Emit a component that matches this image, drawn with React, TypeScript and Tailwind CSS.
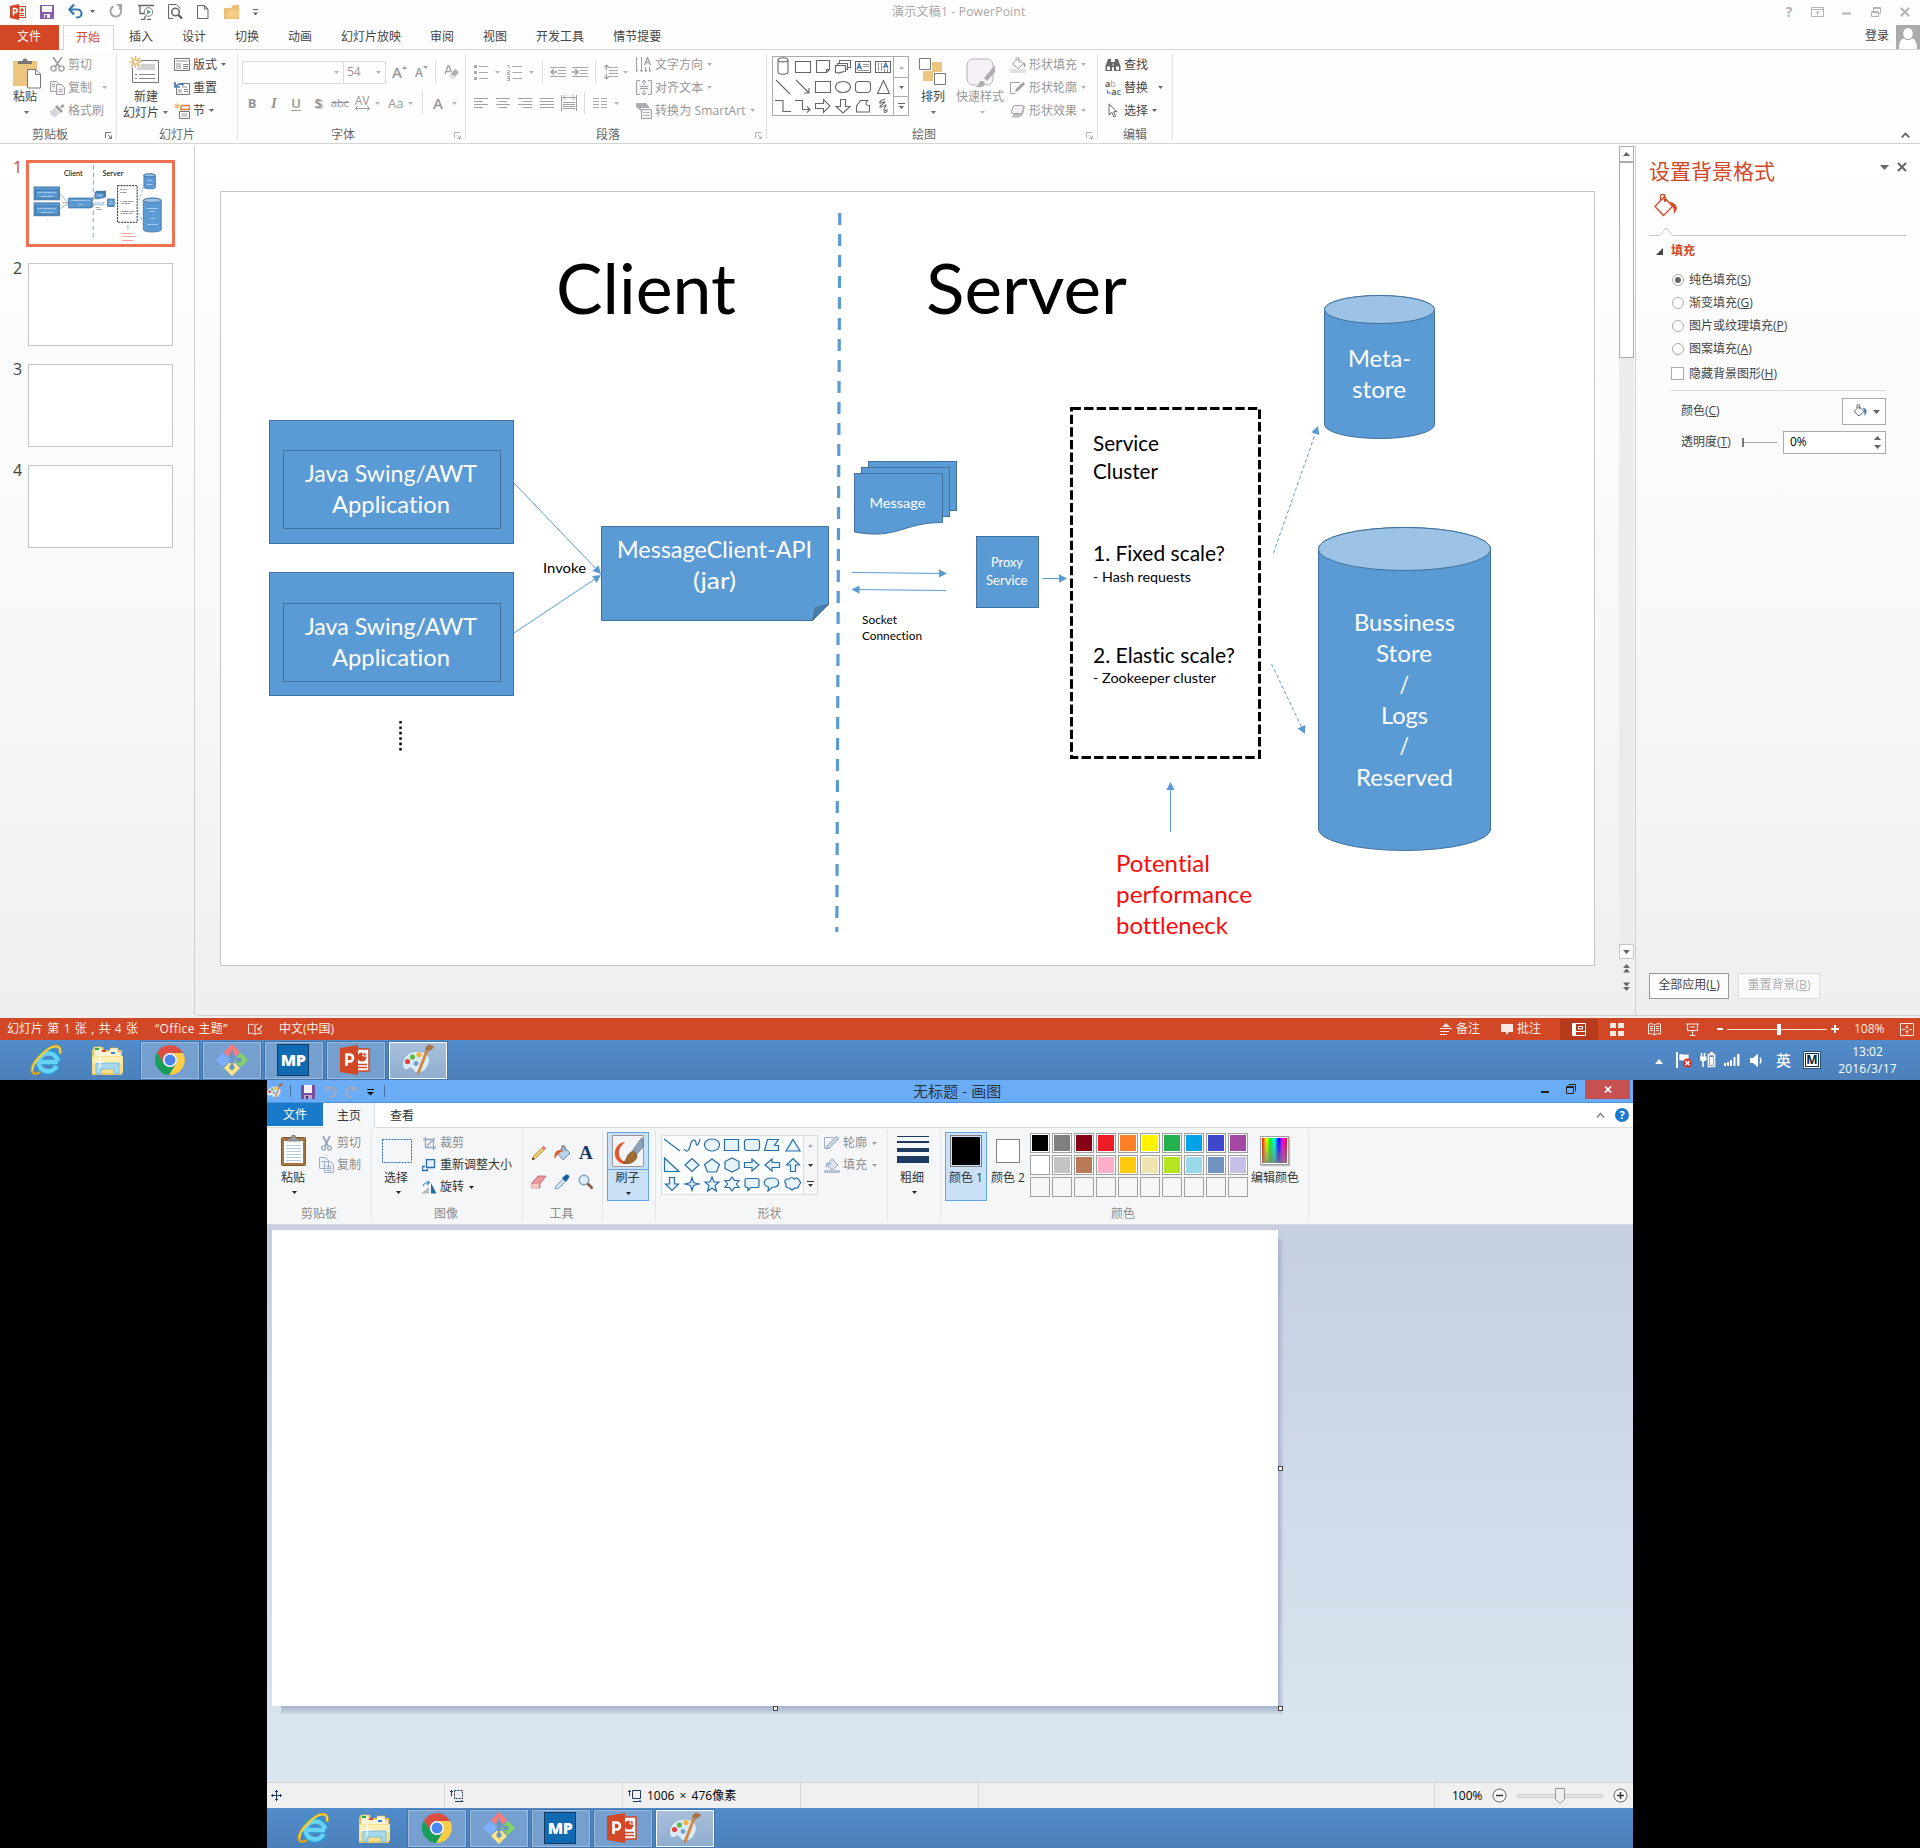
import React from "react";

type Kids = { children?: React.ReactNode };

function Ico({ w, h, c = "", children }: Kids & { w: number; h: number; c?: string }) {
  return (
    <svg width={w} height={h} viewBox={`0 0 ${w} ${h}`} fill="none" className={`block shrink-0 ${c}`}>
      {children}
    </svg>
  );
}

function Dn({ c = "", color = "#666" }: { c?: string; color?: string }) {
  return (
    <Ico w={5} h={3} c={c}>
      <path d="M0 0h5L2.5 3z" fill={color} />
    </Ico>
  );
}

/* ---------------------------------------------------------------- slide diagram */

const FILL = "#5b9bd5";
const EDGE = "#41719c";

function T({ x, y, w, s, f = "#fff", children }: { x: number; y: number; w: number; s: number; f?: string; children: string }) {
  return (
    <text x={x} y={y} fontSize={s} fill={f} textLength={w} lengthAdjust="spacingAndGlyphs">
      {children}
    </text>
  );
}

type ArrowProps = { x1: number; y1: number; x2: number; y2: number; dash?: string; mini?: boolean };

function Arrow({ x1, y1, x2, y2, dash, mini }: ArrowProps) {
  const a = Math.atan2(y2 - y1, x2 - x1);
  const len = mini ? 14 : 8;
  const half = mini ? 8 : 4.2;
  const bx = x2 - len * Math.cos(a);
  const by = y2 - len * Math.sin(a);
  const px = half * Math.sin(a);
  const py = half * Math.cos(a);
  return (
    <g>
      <line
        x1={x1}
        y1={y1}
        x2={bx}
        y2={by}
        stroke={FILL}
        strokeWidth={mini ? 6 : 1}
        strokeDasharray={dash && (mini ? "26 16" : dash)}
      />
      <path d={`M${x2} ${y2}L${bx + px} ${by - py}L${bx - px} ${by + py}z`} fill={FILL} />
    </g>
  );
}

function Cylinder({ x1, x2, y1, y2, r }: { x1: number; x2: number; y1: number; y2: number; r: number }) {
  const rx = (x2 - x1) / 2;
  return (
    <g stroke={EDGE}>
      <path
        d={`M${x1} ${y1 + r}V${y2 - r}A${rx} ${r} 0 0 0 ${x2} ${y2 - r}V${y1 + r}A${rx} ${r} 0 0 0 ${x1} ${y1 + r}z`}
        fill={FILL}
      />
      <ellipse cx={x1 + rx} cy={y1 + r} rx={rx} ry={r} fill="#9cc3e6" />
    </g>
  );
}

function Diagram({ mini }: { mini?: boolean }) {
  return (
    <svg
      viewBox="221 192 1373 773"
      className="block h-full w-full [font-variant-ligatures:none]"
      preserveAspectRatio="none"
      fontFamily='Lato, "Liberation Sans", sans-serif'
      strokeWidth={mini ? 8 : 1}
    >
      <T x={556} y={314} w={180} s={69} f="#000">Client</T>
      <T x={926} y={314} w={201} s={69} f="#000">Server</T>
      <line
        x1={839.8}
        y1={213}
        x2={836.8}
        y2={932}
        stroke={FILL}
        strokeWidth={mini ? 8 : 3.2}
        strokeDasharray={mini ? "44 28" : "12 9"}
      />

      <g fill={FILL} stroke={EDGE}>
        <rect x={269.5} y={420.5} width={244} height={123} />
        <rect x={283.5} y={450.5} width={217} height={78} />
        <rect x={269.5} y={572.5} width={244} height={123} />
        <rect x={283.5} y={603.5} width={217} height={78} />
      </g>
      <T x={305} y={482} w={172} s={23}>Java Swing/AWT</T>
      <T x={332} y={513} w={118} s={23}>Application</T>
      <T x={305} y={635} w={172} s={23}>Java Swing/AWT</T>
      <T x={332} y={666} w={118} s={23}>Application</T>
      <line x1={400.5} y1={721} x2={400.5} y2={751} stroke="#000" strokeWidth={2.4} strokeDasharray="2.6 2.8" />

      <Arrow mini={mini} x1={514} y1={483} x2={601} y2={574} />
      <Arrow mini={mini} x1={514} y1={633} x2={601} y2={575} />
      <T x={543} y={573} w={43} s={13.5} f="#000">Invoke</T>

      <path d="M601.500 526.500h227v78l-16 16h-211z" fill={FILL} stroke={EDGE} />
      <path d="M812.500 620.500l3-13 13-3z" fill="#4a7eae" stroke={EDGE} />
      <T x={617} y={558} w={195} s={23}>MessageClient-API</T>
      <T x={693} y={589} w={43} s={23}>(jar)</T>

      <g fill={FILL} stroke={EDGE}>
        <rect x={868.5} y={461.5} width={88} height={49} />
        <rect x={861.5} y={467.5} width={88} height={49} />
        <path d="M854.500 473.500h88v49C902 522.500 898 540 854.500 532z" />
      </g>
      <T x={869.5} y={508} w={56} s={14.2}>Message</T>

      <Arrow mini={mini} x1={852} y1={572.5} x2={947} y2={573.5} />
      <Arrow mini={mini} x1={946} y1={590.5} x2={851.5} y2={589.5} />
      <T x={862} y={624} w={35} s={11.5} f="#000">Socket</T>
      <T x={862} y={640} w={60} s={11.5} f="#000">Connection</T>

      <rect x={976.5} y={536.5} width={62} height={71} fill={FILL} stroke={EDGE} />
      <T x={991} y={567} w={32} s={12.8}>Proxy</T>
      <T x={986} y={585} w={41.5} s={12.8}>Service</T>
      <Arrow mini={mini} x1={1042.5} y1={578.5} x2={1067} y2={578.5} />

      <rect
        x={1071.5}
        y={408.5}
        width={188}
        height={349}
        stroke="#000"
        strokeWidth={mini ? 8 : 3}
        strokeDasharray={mini ? "20 8" : "9.400 3.200"}
        fill="none"
      />
      <T x={1093} y={451} w={66} s={20.5} f="#000">Service</T>
      <T x={1093} y={479} w={65} s={20.5} f="#000">Cluster</T>
      <T x={1093} y={561} w={132} s={20.5} f="#000">1. Fixed scale?</T>
      <T x={1093} y={582} w={98} s={13.5} f="#000">- Hash requests</T>
      <T x={1093} y={663} w={142} s={20.5} f="#000">2. Elastic scale?</T>
      <T x={1093} y={683} w={123} s={13.5} f="#000">- Zookeeper cluster</T>

      <Arrow mini={mini} x1={1273.5} y1={553} x2={1318} y2={426} dash="3.500 2.500" />
      <Arrow mini={mini} x1={1271.5} y1={664} x2={1305} y2={734} dash="3.500 2.500" />
      <Arrow mini={mini} x1={1170.5} y1={832} x2={1170.5} y2={782} />

      <Cylinder x1={1324.5} x2={1434.5} y1={295.5} y2={438.5} r={14} />
      <T x={1348} y={367} w={63} s={23}>Meta-</T>
      <T x={1352} y={398} w={54} s={23}>store</T>

      <Cylinder x1={1318.5} x2={1490.5} y1={527.5} y2={850.5} r={21.5} />
      <T x={1354} y={631} w={101} s={23}>Bussiness</T>
      <T x={1376} y={662} w={56} s={23}>Store</T>
      <T x={1399.5} y={693} w={9.5} s={23}>/</T>
      <T x={1381} y={724} w={47} s={23}>Logs</T>
      <T x={1399.5} y={754} w={9.5} s={23}>/</T>
      <T x={1356} y={786} w={97} s={23}>Reserved</T>

      <T x={1116} y={872} w={94} s={23} f="#fb0a0a">Potential</T>
      <T x={1116} y={903} w={136} s={23} f="#fb0a0a">performance</T>
      <T x={1116} y={934} w={112} s={23} f="#fb0a0a">bottleneck</T>
    </svg>
  );
}

/* ---------------------------------------------------------------- PowerPoint title and tabs */

function PptIcon() {
  return (
    <Ico w={16} h={16}>
      <path d="M0 2l9-2v16l-9-2z" fill="#d24726" />
      <rect x={9} y={2.5} width={6.5} height={11} fill="#fff" stroke="#d24726" />
      <path d="M10 9.500h4M10 11.500h4" stroke="#d24726" />
      <circle cx={12} cy={6} r={1.7} fill="#d24726" />
      <path d="M3.500 11.500v-7h1.700a2 2 0 0 1 0 4H3.500" stroke="#fff" strokeWidth={1.5} />
    </Ico>
  );
}

function TitleBar() {
  return (
    <div className="flex h-[25px] items-start">
      <div className="flex h-[23px] w-[892px] items-center pl-[10px]">
        <PptIcon />
        <Ico w={14} h={14} c="ml-[14px]">
          <path d="M0 0h14v14H0z" fill="#8a5cb0" />
          <path d="M2 1h10v6H2zM4 9h6v4H4z" fill="#fff" />
          <path d="M5 10h2v3H5z" fill="#8a5cb0" />
        </Ico>
        <Ico w={16} h={15} c="ml-[14px]">
          <path d="M2 5.500h7.500a4 4 0 0 1 0 8H8" stroke="#3e78b3" strokeWidth={2.2} />
          <path d="M6 .5L1.500 5.500 6 10.500" stroke="#3e78b3" strokeWidth={2.4} />
        </Ico>
        <Dn c="ml-[6px]" />
        <Ico w={14} h={15} c="ml-[14px]">
          <path d="M4.500 2.500a5.300 5.300 0 1 0 6 1" stroke="#a6a6a6" strokeWidth={2} />
          <path d="M7 0h6v6z" fill="#a6a6a6" />
        </Ico>
        <Ico w={17} h={16} c="ml-[15px]">
          <path d="M0 1.500h16M2 2v7.500h4M3 15.500h4M9 15.500h4M7 12v3" stroke="#666" strokeWidth={1.3} />
          <circle cx={10.5} cy={8} r={4.3} fill="#fff" stroke="#777" />
          <path d="M9 5.500l4 2.500-4 2.500z" fill="#4aa37b" />
        </Ico>
        <Ico w={15} h={16} c="ml-[13px]">
          <path d="M5 14.500H.5V.5h8l4 4" stroke="#666" />
          <circle cx={7.5} cy={8} r={3.8} stroke="#666" strokeWidth={1.5} fill="#fff" />
          <path d="M10.500 11l3.500 3.500" stroke="#555" strokeWidth={2.2} />
        </Ico>
        <Ico w={12} h={14} c="ml-[14px]">
          <path d="M.5.5h7l3.500 3.500v9.500H.5zM7.500.5V4H11" stroke="#666" />
        </Ico>
        <Ico w={16} h={14} c="ml-[15px]">
          <path d="M0 14V3h7l2-3h6v14z" fill="#eabf73" />
          <path d="M2 13L4.500 5H16l-2.500 8z" fill="#f3cd88" />
        </Ico>
        <Ico w={5} h={7} c="ml-[13px] mt-[2px]">
          <path d="M0 .5h5" stroke="#666" />
          <path d="M0 3.500h5L2.500 6.500z" fill="#666" />
        </Ico>
      </div>
      <div className="w-[140px] whitespace-nowrap text-[12px] leading-[24px] tracking-[0.22px] text-[#a6a6a6]">演示文稿1 - PowerPoint</div>
      <div className="ml-auto flex h-[23px] items-center pr-[10px]">
        <span className="w-[8px] text-center text-[14px] font-bold leading-[22px] text-[#b4b4b4]">?</span>
        <Ico w={13} h={10} c="ml-[18px]">
          <path d="M.5.5h12v9H.5zM.5 2.500h12M6.500 8V4M4.500 6l2-2 2 2" stroke="#b4b4b4" />
        </Ico>
        <Ico w={9} h={3} c="ml-[18px] mt-[3px]">
          <path d="M0 1.500h9" stroke="#b4b4b4" strokeWidth={2} />
        </Ico>
        <Ico w={10} h={10} c="ml-[20px]">
          <path d="M.5 4.500h7v5h-7zM2.500 4V.5h7v6H8M.5 5.500h7M2.500 1.500h7" stroke="#b4b4b4" />
        </Ico>
        <Ico w={10} h={10} c="ml-[19px]">
          <path d="M.8.8l8.400 8.400M9.200.8L.8 9.200" stroke="#b4b4b4" strokeWidth={2} />
        </Ico>
      </div>
    </div>
  );
}

function TabBar() {
  const tab = "h-[24px] leading-[24px]";
  return (
    <div className="flex h-[25px] border-b border-[#d4d4d4] text-[12px] whitespace-nowrap text-[#444]">
      <div className="h-[25px] w-[59px] bg-[#d24726] pr-px text-center leading-[24px] text-white">文件</div>
      <div className="ml-[4px] h-[25px] w-[51px] border-x border-t border-[#d4d4d4] bg-white pr-px text-center leading-[23px] text-[#d24726]">开始</div>
      <div className={`ml-[15px] ${tab}`}>插入</div>
      <div className={`ml-[29px] ${tab}`}>设计</div>
      <div className={`ml-[29px] ${tab}`}>切换</div>
      <div className={`ml-[29px] ${tab}`}>动画</div>
      <div className={`ml-[29px] ${tab}`}>幻灯片放映</div>
      <div className={`ml-[29px] ${tab}`}>审阅</div>
      <div className={`ml-[29px] ${tab}`}>视图</div>
      <div className={`ml-[29px] ${tab}`}>开发工具</div>
      <div className={`ml-[29px] ${tab}`}>情节提要</div>
      <div className="ml-auto leading-[21px]">登录</div>
      <Ico w={24} h={24} c="ml-[7px]">
        <path d="M0 0h24v24H0z" fill="#ababab" />
        <ellipse cx={12} cy={8.5} rx={4.8} ry={5.5} fill="#fff" />
        <path d="M3 24c0-7 2-10 5-10.500 2 2 6 2 8 0 3 .5 5 3.500 5 10.500z" fill="#fff" />
      </Ico>
    </div>
  );
}

/* ---------------------------------------------------------------- PowerPoint ribbon */

function Group({ w, label, lx, launcher, children }: Kids & { w: string; label: string; lx: string; launcher?: string }) {
  return (
    <div className={`flex h-[85px] shrink-0 flex-col border-r border-[#e1e1e1] ${w}`}>
      <div className="flex h-[69px]">{children}</div>
      <div className={`flex h-[16px] items-center whitespace-nowrap text-[12px] leading-[16px] text-[#666] ${lx}`}>
        <span className="mt-[7px]">{label}</span>
        {launcher && (
          <Ico w={7} h={7} c="ml-auto mr-[4px] mt-[8px]">
            <path d="M.5 6V.5H6M3 3l3 3M6.500 3.500v3h-3" stroke={launcher} />
          </Ico>
        )}
      </div>
    </div>
  );
}

const G = "#a0a0a0";

function SmallRow({ icon, text, gap = "ml-[4px]", off, arrow }: { icon: React.ReactNode; text: string; gap?: string; off?: boolean; arrow?: string }) {
  return (
    <div className={`flex h-[23px] items-center whitespace-nowrap text-[12px] leading-[23px] ${off ? "text-[#979797]" : "text-[#444]"}`}>
      <div className="flex w-[16px] shrink-0 justify-center">{icon}</div>
      <span className={gap}>{text}</span>
      {arrow && <Dn c={arrow} color={off ? "#b5b5b5" : "#666"} />}
    </div>
  );
}

function ClipboardGroup() {
  return (
    <Group w="w-[117px]" label="剪贴板" lx="pl-[32px]" launcher="#777">
      <div className="ml-[13px] flex w-[28px] flex-col">
        <Ico w={28} h={31} c="mt-[4px]">
          <path d="M0 3h24v25H0z" fill="#ecc67e" />
          <path d="M5 6V3h4.500a2.500 2.500 0 0 1 5 0H19v3z" fill="#777" />
          <path d="M14.500 11.500h8.500l4.500 4.500v14h-13z" fill="#fff" stroke="#777" />
          <path d="M22.500 12v4.500H27" stroke="#777" />
        </Ico>
        <span className="text-[12px] leading-[16px] text-[#444]">粘贴</span>
        <Dn c="ml-[11px] mt-[6px]" />
      </div>
      <div className="-mt-px ml-[8px] flex flex-col">
        <SmallRow off gap="ml-[3px]" text="剪切" icon={
          <Ico w={15} h={15}>
            <path d="M3 0l6.500 9.500M12 0L5.500 9.500" stroke={G} strokeWidth={1.8} />
            <circle cx={3.5} cy={11.5} r={2.6} stroke={G} strokeWidth={1.4} />
            <circle cx={11.5} cy={11.5} r={2.6} stroke={G} strokeWidth={1.4} />
          </Ico>} />
        <SmallRow off gap="ml-[3px]" text="复制" arrow="ml-[10px]" icon={
          <Ico w={15} h={14}>
            <path d="M.5.500h6l2 2v8h-8z" fill="#f5f1f7" stroke={G} />
            <path d="M6.500 3.500h5l3 3v7h-8z" fill="#f5f1f7" stroke={G} />
            <path d="M2 3.500h3M2 5.500h3M8.500 8.500h4M8.500 10.500h4" stroke={G} />
          </Ico>} />
        <SmallRow off gap="ml-[3px]" text="格式刷" icon={
          <Ico w={16} h={14}>
            <path d="M1 7l5-3 5 5-5 4.500C3 13 1 10 1 7z" fill="#d8d4da" />
            <path d="M6 3l2-2 6 6-2 2zM11 2.500L14 0l1.500 1.500L13 4.500z" fill={G} />
          </Ico>} />
      </div>
    </Group>
  );
}

function SlidesGroup() {
  return (
    <Group w="w-[121px]" label="幻灯片" lx="pl-[42px]">
      <div className="ml-[6px] flex w-[50px] flex-col">
        <Ico w={32} h={30} c="ml-[6px] mt-[2px]">
          <path d="M3.500 4.500h26v22h-26z" fill="#fff" stroke="#777" />
          <path d="M8 8h18v6H8z" fill="#d0d0d0" />
          <path d="M6 18.500h2M10 18.500h16M6 22.500h2M10 22.500h16" stroke="#888" />
          <path d="M0 0h12v12H0z" fill="#fff" opacity={0.6} />
          <path d="M6.500 0v12M.5 6h12M2 1.500l9 9M11 1.500l-9 9" stroke="#e9bd66" strokeWidth={1.6} />
          <circle cx={6.5} cy={6} r={2} fill="#fff" stroke="#e9bd66" />
        </Ico>
        <span className="ml-[11px] mt-[3px] text-[12px] leading-[16px] text-[#444]">新建</span>
        <span className="flex items-center whitespace-nowrap text-[12px] leading-[15px] text-[#444]">
          幻灯片
          <Dn c="ml-[4px]" />
        </span>
      </div>
      <div className="-mt-px ml-[1px] flex flex-col">
        <SmallRow gap="ml-[3px]" text="版式" arrow="ml-[4px]" icon={
          <Ico w={16} h={13}>
            <path d="M.5.5h15v12H.5z" fill="#fff" stroke="#777" />
            <path d="M2 2h12v2H2zM2 5h5v6H2z" fill="#c8c8c8" />
            <path d="M9 6.500h5M9 8.500h5M9 10.500h5" stroke="#888" />
          </Ico>} />
        <SmallRow gap="ml-[3px]" text="重置" icon={
          <Ico w={16} h={14}>
            <path d="M6 2.500h9.500v11h-13V7" stroke="#777" />
            <path d="M8 5h5v2H8zM4 8h4v4H4z" fill="#c8c8c8" />
            <path d="M10 8.500h4M10 10.500h4" stroke="#888" />
            <path d="M9.500 4.500A4.500 4.500 0 0 0 2 5.500M1 1v5h5" stroke="#3e78b3" strokeWidth={1.6} />
          </Ico>} />
        <SmallRow gap="ml-[3px]" text="节" arrow="ml-[4px]" icon={
          <Ico w={16} h={16}>
            <path d="M7 2.500h8.500M7 2.500v4h8.500v-4" stroke="#d97a3a" strokeWidth={1.4} />
            <path d="M5.500 8.500h10v7h-10z" fill="#fff" stroke="#777" />
            <path d="M7.500 11h6M7.500 13h6" stroke="#999" />
            <path d="M3 0v6M0 3h6M1 1l4 4M5 1L1 5" stroke="#e9bd66" />
          </Ico>} />
      </div>
    </Group>
  );
}

function VSep({ c = "" }: { c?: string }) {
  return <div className={`h-[22px] w-px shrink-0 bg-[#dcdcdc] ${c}`} />;
}

function FontGroup() {
  const cell = "w-[22px] text-center";
  return (
    <Group w="w-[228px]" label="字体" lx="pl-[93px]" launcher="#b5b5b5">
      <div className="flex flex-col pl-[4px] text-[#979797]">
        <div className="flex h-[36px] items-center">
          <div className="flex h-[23px] w-[102px] items-center justify-end border border-[#dcdcdc] pr-[4px]">
            <Dn color="#b5b5b5" />
          </div>
          <div className="-ml-px flex h-[23px] w-[43px] items-center justify-between border border-[#dcdcdc] pl-[3px] pr-[4px] text-[12px] leading-[20px]">
            54
            <Dn color="#b5b5b5" />
          </div>
          <span className="ml-[6px] text-[15px] font-semibold leading-[20px]">A</span>
          <Ico w={5} h={3} c="-mt-[10px]"><path d="M0 3h5L2.500 0z" fill={G} /></Ico>
          <span className="ml-[8px] mt-[2px] text-[12px] font-semibold leading-[20px]">A</span>
          <Dn c="-mt-[10px]" color={G} />
          <VSep c="ml-[7px]" />
          <Ico w={15} h={15} c="ml-[8px]">
            <path d="M1 9L4 1h1l2.500 6M2 6.500h4" stroke={G} strokeWidth={1.4} />
            <path d="M5 11l6-7 4 3-6 7z" fill="#b0acb2" />
            <path d="M5 11l2-2.300 4 3L9 14z" fill="#e4e0e6" />
          </Ico>
        </div>
        <div className="-ml-px flex h-[26px] items-center text-[13px] leading-[20px]">
          <span className={`${cell} font-bold`}>B</span>
          <span className={`${cell} font-["Liberation_Serif"] text-[15px] font-bold italic`}>I</span>
          <span className={`${cell} font-semibold underline underline-offset-2`}>U</span>
          <span className={`${cell} font-bold [text-shadow:2px_1px_1px_#bbb]`}>S</span>
          <span className="w-[22px] text-center text-[11px] line-through">abc</span>
          <span className="flex w-[22px] flex-col items-center text-[12px] leading-[11px]">
            AV
            <Ico w={15} h={5}><path d="M.5 2.500h14M3 0L.5 2.500 3 5M12 0l2.500 2.500L12 5" stroke={G} /></Ico>
          </span>
          <Dn c="ml-[2px]" color="#b5b5b5" />
          <span className="ml-[8px] w-[18px]">Aa</span>
          <Dn c="ml-[2px]" color="#b5b5b5" />
          <VSep c="ml-[9px]" />
          <span className="ml-[10px] w-[12px] text-[15px] font-semibold">A</span>
          <Dn c="ml-[7px]" color="#b5b5b5" />
        </div>
      </div>
    </Group>
  );
}

function Lines({ rows, c }: { rows: [number, number][]; c?: string }) {
  return (
    <Ico w={14} h={12} c={c}>
      {rows.map(([a, b], i) => (
        <path key={i} d={`M${a} ${i * 3 + 1.5}H${b}`} stroke={G} />
      ))}
    </Ico>
  );
}

function ParagraphGroup() {
  const L = "#aaa";
  return (
    <Group w="w-[301px]" label="段落" lx="pl-[130px]" launcher="#b5b5b5">
      <div className="flex w-[162px] flex-col pl-[8px]">
        <div className="flex h-[36px] items-center">
          <Ico w={14} h={15}>
            <path d="M0 0h3v3H0zM0 6h3v3H0zM0 12h3v3H0z" fill={L} />
            <path d="M5 1.500h9M5 7.500h9M5 13.500h9" stroke={L} />
          </Ico>
          <Dn c="ml-[7px]" color="#b5b5b5" />
          <Ico w={15} h={17} c="ml-[7px]">
            <path d="M5.500 2.500H15M5.500 8.500H15M5.500 14.500H15M.5 1.500h1.500v3M0 6.500h2.500v2H.5v2h2.500M0 12.500h2.500v4H0M0 14.500h2.500" stroke={L} />
          </Ico>
          <Dn c="ml-[7px]" color="#b5b5b5" />
          <VSep c="ml-[8px]" />
          <Ico w={16} h={12} c="ml-[7px]">
            <path d="M0 1.500h16M8 4.500h8M8 7.500h8M0 10.500h16" stroke={L} />
            <path d="M1 6h6M4 3L1 6l3 3" stroke={G} strokeWidth={1.5} />
          </Ico>
          <Ico w={16} h={12} c="ml-[6px]">
            <path d="M0 1.500h16M8 4.500h8M8 7.500h8M0 10.500h16" stroke={L} />
            <path d="M0 6h6M3 3l3 3-3 3" stroke={G} strokeWidth={1.5} />
          </Ico>
          <VSep c="ml-[7px]" />
          <Ico w={14} h={16} c="ml-[8px]">
            <path d="M5 3.500h9M5 6.500h9M5 9.500h9M5 12.500h9" stroke={L} />
            <path d="M2.500 1v5.500M0 3.500L2.500 1 5 3.500M2.500 9.500V15M0 12.500L2.500 15 5 12.500" stroke={G} strokeWidth={1.2} />
          </Ico>
          <Dn c="ml-[5px]" color="#b5b5b5" />
        </div>
        <div className="flex h-[26px] items-center">
          <Lines rows={[[0, 14], [0, 9], [0, 14], [0, 9]]} />
          <Lines c="ml-[8px]" rows={[[0, 14], [3, 11], [0, 14], [3, 11]]} />
          <Lines c="ml-[8px]" rows={[[0, 14], [5, 14], [0, 14], [5, 14]]} />
          <Lines c="ml-[8px]" rows={[[0, 14], [0, 14], [0, 14], [0, 14]]} />
          <Ico w={16} h={16} c="ml-[7px]">
            <path d="M.5 0v16M15.500 0v16M2 7.500h12M2 9.500h12M2 11.500h12M2 13.500h12" stroke={G} />
            <path d="M2 2.500h12M4.500 0L2 2.500 4.500 5M11.500 0L14 2.500 11.500 5" stroke={G} />
          </Ico>
          <VSep c="ml-[7px]" />
          <Ico w={14} h={12} c="ml-[8px]">
            <path d="M0 1.500h6M0 4.500h6M0 7.500h6M0 10.500h6M8 1.500h6M8 4.500h6M8 7.500h6M8 10.500h6" stroke={L} />
          </Ico>
          <Dn c="ml-[7px]" color="#b5b5b5" />
        </div>
      </div>
      <div className="-mt-px ml-[8px] flex flex-col">
        <SmallRow off gap="ml-[3px]" text="文字方向" arrow="ml-[4px]" icon={
          <Ico w={16} h={16}>
            <path d="M.5 0v15M5.500 0v15M9.500 10v5M13.500 10v5M0 13.500h2M4 13.500h3M9 13.500h2M13 13.500h2" stroke={G} />
            <path d="M8.500 8L11.500.5l3 7.500M9.500 5.500h4" stroke={G} strokeWidth={1.3} />
          </Ico>} />
        <SmallRow off gap="ml-[3px]" text="对齐文本" arrow="ml-[4px]" icon={
          <Ico w={16} h={15}>
            <path d="M.5.5h15v14H.5z" fill="#f5f1f7" />
            <path d="M4 .5H.5v14H4M12 .5h3.500v14H12M4 6.500h8M4 8.500h8M8 0v5M6 2l2-2 2 2M8 10v5M6 13l2 2 2-2" stroke={G} />
          </Ico>} />
        <SmallRow off gap="ml-[3px] tracking-[0.1px]" text="转换为 SmartArt" arrow="ml-[4px]" icon={
          <Ico w={16} h={16}>
            <path d="M0 0h10l4 5H5v3L0 4z" fill="#b0acb2" />
            <path d="M5.500 6.500h10v9h-10z" fill="#f5f1f7" stroke={G} />
            <path d="M7.500 9.500h2M10.500 9.500h3M7.500 12.500h2M10.500 12.500h3" stroke={G} />
          </Ico>} />
      </div>
    </Group>
  );
}

const galleryShapes: string[] = [
  "M5 3c0-3 10-3 10 0v12c0 3-10 3-10 0zM5 3c0 2.500 10 2.500 10 0",
  "M2.500 4.500h15v11h-15z",
  "M3.500 3.500h13v9l-3 3h-10zM16.500 12.500h-3v3",
  "M2.500 8.500h10v6c-5 0-5 2.500-10 1zM4.500 8V6.500h10v6h-1.500M6.500 6V3.500h11v7h-2.500",
  "M2.500 4.500h15v11h-15z",
  "M2.500 4.500h15v11h-15z",
  "M3 3l14 14",
  "M3 3l13 13M16 11v5h-5",
  "M2.500 4.500h15v11h-15z",
  "M10 4.500c10 0 10 11 0 11s-10-11 0-11z",
  "M5.500 4.500h9a3 3 0 0 1 3 3v5a3 3 0 0 1-3 3h-9a3 3 0 0 1-3-3v-5a3 3 0 0 1 3-3z",
  "M10.500 3.500l6 13h-12z",
  "M2 4.500h8v11h8",
  "M2 4.500h7.500v9h7M14 10.500l3 3-3 3",
  "M2.500 7.500h8V3.500l6.500 6.500-6.500 6.500v-4h-8z",
  "M7.500 3.500h5v7H17L10 17 3 10.500h4.500z",
  "M3.500 16v-6l4-5.500h7c-3 3-2 5 2 5v6.500z",
  "M12 3c-4 1-6 3-5 4s5-2 5-1-6 4-5 5 5-2 6-2-3 4-2 5 4-1 3 1-3 2-3 0",
];

function DrawingGroup() {
  return (
    <Group w="w-[331px]" label="绘图" lx="pl-[145px]" launcher="#b5b5b5">
      <div className="ml-[5px] mt-[2px] flex h-[60px] w-[137px] shrink-0 border border-[#ababab] bg-white">
        <div className="grid grid-cols-[repeat(6,20px)] grid-rows-[repeat(3,19.500px)]">
          {galleryShapes.map((d, i) => (
            <Ico w={20} h={20} key={i}>
              <path d={d} stroke="#666" strokeWidth={1.1} />
              {i === 4 && (
                <>
                  <path d="M4 12.500l2.200-6 2.300 6M5 10.500h3" stroke="#3e78b3" strokeWidth={1.3} />
                  <path d="M10 7.500h6M10 9.500h6M5 13.500h11" stroke="#999" />
                </>
              )}
              {i === 5 && (
                <>
                  <path d="M10.500 11l2.200-5 2.300 5M11.500 9.500h3" stroke="#3e78b3" strokeWidth={1.3} />
                  <path d="M5.500 6v8M8.500 6v8M11.500 12v3M14.500 12v3" stroke="#999" />
                </>
              )}
            </Ico>
          ))}
        </div>
        <div className="ml-auto flex w-[15px] flex-col border-l border-[#ababab]">
          <div className="flex h-[21px] items-center justify-center border-b border-[#ababab]">
            <Ico w={5} h={3}><path d="M0 3h5L2.500 0z" fill="#b5b5b5" /></Ico>
          </div>
          <div className="flex h-[19px] items-center justify-center border-b border-[#ababab]"><Dn /></div>
          <div className="flex h-[18px] flex-col items-center justify-center gap-[2px]">
            <div className="h-px w-[7px] bg-[#666]" />
            <Dn />
          </div>
        </div>
      </div>
      <div className="ml-[10px] flex w-[28px] shrink-0 flex-col">
        <Ico w={28} h={28} c="mt-[4px]">
          <path d="M13 4h10v10H13zM4 13h10v10H4z" fill="#ecc67e" />
          <path d="M.5.5h11v11H.5zM15.500 15.500h11v11h-11z" fill="#fff" stroke="#777" />
        </Ico>
        <span className="ml-[2px] mt-[3px] text-[12px] leading-[16px] text-[#444]">排列</span>
        <Dn c="ml-[12px] mt-[6px]" />
      </div>
      <div className="ml-[9px] flex w-[50px] shrink-0 flex-col whitespace-nowrap">
        <Ico w={30} h={30} c="ml-[10px] mt-[4px]">
          <rect x={1} y={1} width={26} height={26} rx={6} fill="#f5f1f7" stroke="#b5b1b7" />
          <path d="M29 7v7l-8 9-3-3z" fill="#b0acb2" />
          <path d="M8 29c4 0 4-6 8-7l4 3c-1 4-6 6-12 4z" fill="#b0acb2" stroke="#fff" />
        </Ico>
        <span className="mt-[1px] text-[12px] leading-[16px] text-[#979797]">快速样式</span>
        <Dn c="ml-[24px] mt-[6px]" color="#b5b5b5" />
      </div>
      <div className="-mt-px ml-[4px] flex flex-col">
        <SmallRow off gap="ml-[3px]" text="形状填充" arrow="ml-[4px]" icon={
          <Ico w={16} h={16}>
            <path d="M2.500 7L8 1.500 13.500 7 8 11.500zM6 4V1.500a1.500 1.500 0 0 1 3 0V6" stroke={G} fill="#fff" />
            <path d="M13 5c3 1 3 4 1.500 6z" fill={G} />
            <path d="M0 12h16v4H0z" fill="#e4e0e6" />
          </Ico>} />
        <SmallRow off gap="ml-[3px]" text="形状轮廓" arrow="ml-[4px]" icon={
          <Ico w={16} h={14}>
            <path d="M10 1.500H.5v11h5" stroke={G} />
            <path d="M5 11l1-3 7-7 2 2-7 7z" fill={G} />
          </Ico>} />
        <SmallRow off gap="ml-[3px]" text="形状效果" arrow="ml-[4px]" icon={
          <Ico w={16} h={14}>
            <path d="M4 9l3-7h8l-2 9-4 2.500H2z" fill="#c0bcc2" />
            <path d="M5 1.500h7q2 0 1.500 2L12.500 8q-.5 1.500-2 1.500H3q-2 0-1.500-2L3 3q.5-1.500 2-1.500z" fill="#f5f1f7" stroke={G} />
          </Ico>} />
      </div>
    </Group>
  );
}

function EditGroup() {
  return (
    <Group w="w-[75px]" label="编辑" lx="pl-[25px]">
      <div className="-mt-px ml-[7px] flex flex-col">
        <SmallRow gap="ml-[3px]" text="查找" icon={
          <Ico w={16} h={14}>
            <path d="M3 1h3v3h4V1h3l1 3 1.500 4v5H9V9H7v4H.5V8L2 4z" fill="#666" />
            <path d="M2 8.500h3V12H2zM11 8.500h3V12h-3zM7.500 5.500h1v2h-1z" fill="#fff" />
          </Ico>} />
        <SmallRow gap="ml-[3px]" text="替换" arrow="ml-[10px]" icon={
          <div className="w-[16px] text-[9px] font-semibold leading-[8px]">
            <div className="flex">a<span className="font-normal text-[#999]">b</span></div>
            <div className="flex justify-end">
              <Ico w={4} h={5} c="mt-[2px]"><path d="M.5 0v3H4" stroke="#3e78b3" /></Ico>
              a<span className="text-[#3e78b3]">c</span>
            </div>
          </div>} />
        <SmallRow gap="ml-[3px]" text="选择" arrow="ml-[4px]" icon={
          <Ico w={10} h={15}>
            <path d="M1 .8v11l2.800-2.500 2 4.700 1.800-.8-2-4.500H9z" fill="#fff" stroke="#666" />
          </Ico>} />
      </div>
    </Group>
  );
}

function Ribbon() {
  return (
    <div className="flex h-[94px] border-b border-[#d4d4d4] pt-[4px]">
      <ClipboardGroup />
      <SlidesGroup />
      <FontGroup />
      <ParagraphGroup />
      <DrawingGroup />
      <EditGroup />
      <Ico w={9} h={6} c="ml-auto mr-[10px] mt-[78px]">
        <path d="M.7 5.300L4.500 1.500l3.800 3.800" stroke="#666" strokeWidth={1.8} />
      </Ico>
    </div>
  );
}

/* ---------------------------------------------------------------- PowerPoint body */

function Thumbs() {
  return (
    <div className="flex h-[869px] w-[195px] shrink-0 flex-col border-r border-[#d0d0d0] text-[16px] text-[#444]">
      <div className="mt-[14px] flex h-[87px] pl-[13px]">
        <span className="w-[13px] leading-[14px] text-[#d24726]">1</span>
        <div className="h-[87px] w-[149px] border-[3px] border-[#f0714f] bg-white">
          <Diagram mini />
        </div>
      </div>
      {[2, 3, 4].map((n) => (
        <div key={n} className={`flex h-[83px] pl-[13px] ${n === 2 ? "mt-[16px]" : "mt-[18px]"}`}>
          <span className="w-[15px] leading-[10px]">{n}</span>
          <div className="h-[83px] w-[145px] border border-[#c6c6c6] bg-white" />
        </div>
      ))}
    </div>
  );
}

function Scrollbar() {
  return (
    <div className="flex w-[16px] shrink-0 flex-col">
      <div className="flex h-[16px] w-[15px] items-center justify-center border border-[#ababab] bg-white">
        <Ico w={7} h={4}><path d="M0 4h7L3.500 0z" fill="#666" /></Ico>
      </div>
      <div className="h-[196px] w-[15px] border border-[#ababab] bg-white" />
      <div className="h-[586px] w-[15px] bg-[#ececec]" />
      <div className="flex h-[15px] w-[15px] items-center justify-center border border-[#c6c6c6] bg-white">
        <Ico w={7} h={4}><path d="M0 0h7L3.500 4z" fill="#666" /></Ico>
      </div>
      <Ico w={7} h={9} c="ml-[4px] mt-[5px]"><path d="M0 4h7L3.500 0zM0 8.500h7L3.500 4.500z" fill="#666" /></Ico>
      <Ico w={7} h={9} c="ml-[4px] mt-[9px]"><path d="M0 .5h7L3.500 4.500zM0 5h7L3.500 9z" fill="#666" /></Ico>
    </div>
  );
}

function Radio({ on, label, k }: { on?: boolean; label: string; k: string }) {
  return (
    <div className="flex h-[23px] items-center">
      <div className="flex h-[12px] w-[12px] items-center justify-center rounded-full border border-[#ababab] bg-white">
        {on && <div className="h-[6px] w-[6px] rounded-full bg-[#666]" />}
      </div>
      <span className="ml-[5px]">{label}(<u className="underline-offset-1">{k}</u>)</span>
    </div>
  );
}

function FormatPane() {
  return (
    <div className="flex w-[285px] shrink-0 flex-col border-l border-[#d0d0d0] pl-[13px] text-[12px] leading-[18px] whitespace-nowrap text-[#444]">
      <div className="flex h-[42px] items-start">
        <span className="mt-[10px] text-[21px] leading-[30px] text-[#d24726]">设置背景格式</span>
        <Ico w={9} h={5} c="ml-[105px] mt-[19px]"><path d="M0 0h9L4.500 5z" fill="#666" /></Ico>
        <Ico w={10} h={10} c="ml-[8px] mt-[16px]"><path d="M1 1l8 8M9 1L1 9" stroke="#666" strokeWidth={2} /></Ico>
      </div>
      <Ico w={24} h={23} c="ml-[5px] mt-[6px]">
        <path d="M10 3L1 12.500 9.500 21.500 18.500 12.500zM6.500 6V2.500a2.200 2.200 0 0 1 4.500 0V8" stroke="#d24726" strokeWidth={1.3} />
        <path d="M11 7.500l-1.500-2h3z" fill="#d24726" stroke="#d24726" />
        <path d="M15 7.500c5 1 9 4 7.500 8.500L19.500 20.500c1-4 .5-8-4.500-13z" fill="#d24726" />
      </Ico>
      <Ico w={257} h={10} c="mt-[10px]"><path d="M0 8.500h10.500L17 1l6.500 7.500H257" stroke="#c6c6c6" /></Ico>
      <div className="mt-[4px] flex h-[20px] items-center pl-[7px]">
        <Ico w={7} h={7}><path d="M7 0v7H0z" fill="#444" /></Ico>
        <span className="ml-[8px] font-bold text-[#d24726]">填充</span>
      </div>
      <div className="mt-[7px] flex flex-col pl-[23px]">
        <Radio on label="纯色填充" k="S" />
        <Radio label="渐变填充" k="G" />
        <Radio label="图片或纹理填充" k="P" />
        <Radio label="图案填充" k="A" />
        <div className="-ml-px mt-[1px] flex h-[25px] items-center">
          <div className="h-[13px] w-[13px] border border-[#ababab] bg-white" />
          <span className="ml-[5px]">隐藏背景图形(<u className="underline-offset-1">H</u>)</span>
        </div>
      </div>
      <div className="ml-[22px] mt-[4px] h-px w-[215px] bg-[#dcdcdc]" />
      <div className="mt-[7px] flex h-[27px] w-[237px] items-center justify-between pl-[32px]">
        <span className="-mt-[2px]">颜色(<u className="underline-offset-1">C</u>)</span>
        <div className="flex h-[27px] w-[44px] items-center border border-[#ababab] bg-white pl-[10px]">
          <Ico w={15} h={13} c="-mt-[3px]">
            <path d="M6 2.500L1 7.500l5 4.500 5-4.500zM4 4V1.500a1.300 1.300 0 0 1 2.700 0V5" stroke="#666" />
            <path d="M9.500 3.500c4 1 5 4 3.500 6L11.500 12c0-3 0-6-2-8.500z" fill="#3e78b3" />
          </Ico>
          <Ico w={7} h={4} c="ml-[5px]"><path d="M0 0h7L3.500 4z" fill="#666" /></Ico>
        </div>
      </div>
      <div className="mt-[6px] flex h-[23px] w-[237px] items-center pl-[32px]">
        <span className="-mt-[2px]">透明度(<u className="underline-offset-1">T</u>)</span>
        <div className="ml-auto h-[9px] w-[2px] bg-[#777]" />
        <div className="h-px w-[33px] bg-[#ababab]" />
        <div className="ml-[6px] flex h-[23px] w-[103px] items-center justify-between border border-[#ababab] bg-white pl-[6px] pr-[4px] text-black">
          <span className="-mt-[2px]">0%</span>
          <div className="flex flex-col gap-[5px]">
            <Ico w={7} h={4}><path d="M0 4h7L3.500 0z" fill="#666" /></Ico>
            <Ico w={7} h={4}><path d="M0 0h7L3.500 4z" fill="#666" /></Ico>
          </div>
        </div>
      </div>
      <div className="mb-[16px] mt-auto flex gap-[9px]">
        <div className="flex h-[26px] w-[80px] items-center justify-center border border-[#999] bg-[#fdfdfd] pb-[2px]">
          全部应用(<u className="underline-offset-1">L</u>)
        </div>
        <div className="flex h-[26px] w-[82px] items-center justify-center border border-[#dcdcdc] bg-[#fbfbfb] pb-[2px] text-[#b0b0b0]">
          重置背景(<u className="underline-offset-1">B</u>)
        </div>
      </div>
    </div>
  );
}

function StatusBar() {
  const i = "#fce8e2";
  return (
    <div className="flex h-[22px] items-center whitespace-nowrap bg-[#d24726] pl-[7px] text-[12px] leading-[22px] text-[#fdeee9]">
      <span className="w-[148px] [word-spacing:1.2px]">幻灯片 第 1 张 , 共 4 张</span>
      <span className="w-[93px] tracking-[0.4px]">“Office 主题”</span>
      <Ico w={15} h={13}>
        <path d="M7 11.500C5 10 3 10 .5 10.500v-9C3 1 5 1 7 2.500zm0-9C8 1.500 9 1.200 10.500 1M7 11.500c2-1.200 4-1.200 6-1v-3" stroke={i} />
        <path d="M9.500 5l1.500 2 3-5" stroke={i} strokeWidth={1.3} />
      </Ico>
      <span className="ml-[16px]">中文(中国)</span>
      <div className="ml-auto flex h-[22px] items-center">
        <Ico w={12} h={12}>
          <path d="M0 5.500h12M0 8.500h9M0 11.500h7" stroke={i} strokeWidth={1.2} />
          <path d="M2 4h8L6 0z" fill={i} />
        </Ico>
        <span className="ml-[4px]">备注</span>
        <Ico w={12} h={11} c="ml-[21px]"><path d="M0 0h12v8H8l-3 3V8H0z" fill={i} /></Ico>
        <span className="ml-[4px]">批注</span>
        <div className="ml-[19px] flex h-[21px] w-[38px] items-center justify-center bg-[#b83a1c]">
          <Ico w={14} h={13}>
            <path d="M.5.5h13v12H.5zM3.500.5v12M3.500 8.500h10M6.500 3.500h4v2.500h-4z" stroke="#fff" />
            <path d="M1 1h2v11H1z" fill="#fff" />
          </Ico>
        </div>
        <Ico w={14} h={13} c="ml-[12px]"><path d="M0 0h6v5H0zM8 0h6v5H8zM0 8h6v5H0zM8 8h6v5H8z" fill={i} /></Ico>
        <Ico w={13} h={13} c="ml-[24px]">
          <path d="M6.500 12C4.500 10.500 2.500 10.500.5 11V1c2-.5 4-.5 6 1 2-1.500 4-1.500 6-1v10c-2-.5-4-.5-6 1zM6.500 2v10M2 3.500h3M2 5.500h3M2 7.500h3M8 3.500h3M8 5.500h3M8 7.500h3" stroke={i} />
        </Ico>
        <Ico w={13} h={13} c="ml-[25px]">
          <path d="M0 1h13M1.500 1v6.500h10V1M6.500 8v4M3.500 12.500h6M4 4h5" stroke={i} strokeWidth={1.2} />
        </Ico>
        <div className="ml-[18px] h-[2px] w-[6px] bg-white" />
        <div className="ml-[4px] flex w-[100px] items-center">
          <div className="h-px w-[50px] bg-[#fce8e2]" />
          <div className="h-[11px] w-[4px] bg-white" />
          <div className="h-px w-[46px] bg-[#fce8e2]" />
        </div>
        <Ico w={8} h={8} c="ml-[4px]"><path d="M4 0v8M0 4h8" stroke="#fff" strokeWidth={2} /></Ico>
        <span className="ml-[15px] w-[46px]">108%</span>
        <Ico w={14} h={13} c="mr-[6px]">
          <path d="M.5.5h13v12H.5z" stroke={i} />
          <path d="M7 2v3M5.500 4L7 5.500 8.500 4M7 11V8M5.500 9L7 7.500 8.500 9M2 6.500h3M9 6.500h3" stroke={i} />
        </Ico>
      </div>
    </div>
  );
}

/* ---------------------------------------------------------------- taskbar */

function PaletteIcon({ s }: { s: number }) {
  return (
    <svg width={s} height={s} viewBox="0 0 32 32" fill="none" className="block shrink-0">
      <path d="M16 7C7 7 .5 13 .5 20c0 5 3.500 7 5.500 5 2-2 4-1 5 1 2 4 8 4 12 0 8-9 5-19-7-19z" fill="#d9ebf6" stroke="#8fb3cf" />
      <circle cx={5.5} cy={17.5} r={2.6} fill="#e0443e" />
      <circle cx={10.5} cy={13} r={2.6} fill="#5db54a" />
      <circle cx={17} cy={10.5} r={2.6} fill="#f2b33d" />
      <circle cx={14} cy={19.5} r={2.4} fill="#6f9fca" />
      <path d="M26 7L17.500 29l-2 2v-3L24 6z" fill="#e0883a" stroke="#b96a26" strokeWidth={0.5} />
      <path d="M23 5c0-3 3-3 4-5 1 2 5 1 5 3-1 2-4 4-6 4z" fill="#a8744c" />
    </svg>
  );
}

function TaskButton({ active, children }: Kids & { active?: boolean }) {
  return (
    <div className="ml-[2px] h-[39px] w-[60px] border border-[#3f74ac] p-0">
      <div
        className={`flex h-[37px] w-[58px] items-center justify-center border ${
          active ? "border-white bg-linear-to-b from-[#a9c0db] to-[#90add0]" : "border-[#9dbbdc] bg-[#759fce]"
        }`}
      >
        {children}
      </div>
    </div>
  );
}

function TaskIcons() {
  return (
    <div className="flex h-[40px] items-center">
      <Ico w={32} h={32} c="ml-[30px]">
        <path d="M9 18h20M27 22.500a10 10 0 0 1-19-4.500 10 10 0 0 1 20-1" stroke="#2f97cf" strokeWidth={6.4} />
        <path d="M9 18h19M26.500 22a9.500 9.500 0 0 1-18-4.500 10 10 0 0 1 19.500-.5" stroke="#66d2f5" strokeWidth={4.6} />
        <path d="M30 10c1-4 0-8-4-8-8 0-25 16-24 25 1 4 5 3 8 1" stroke="#d9a514" strokeWidth={2.6} />
        <path d="M30 9c1-4-1-6.500-4-6.500C18 2.500 2 18 2.500 26.500" stroke="#f8d94a" strokeWidth={1.6} />
      </Ico>
      <Ico w={33} h={32} c="ml-[29px]">
        <path d="M1 31V6l2-3h9l1 3h18v25z" fill="#e8c867" />
        <path d="M3 9V3h8v4h8V4h8v4h3v5H3z" fill="#fbf3d6" stroke="#d9b75b" strokeWidth={0.7} />
        <path d="M4 4h4v2H4z" fill="#1fae3b" />
        <path d="M11 6h4v2h-4z" fill="#d8442e" />
        <path d="M20 8h4v2h-4z" fill="#2f87d6" />
        <path d="M1 12h31v17H1z" fill="#f7e08c" />
        <path d="M2 13h29v7H2z" fill="#fbeeb4" />
        <path d="M5 30V19h23v11h-5v-5H10v5z" fill="#a6d8ee" stroke="#6fb4d8" strokeWidth={0.8} />
        <path d="M9 12v12M4 18h10" stroke="#fff" />
      </Ico>
      <div className="ml-[14px] flex">
        <TaskButton>
          <Ico w={32} h={32}>
            <path d="M3 8.500A15 15 0 0 1 29 9H16A7 7 0 0 0 9.900 19.500z" fill="#dc4e41" />
            <path d="M29 9A15 15 0 0 1 15 31l7.100-11.500A7 7 0 0 0 16 9z" fill="#ffcd46" />
            <path d="M15 31A15 15 0 0 1 3 8.500l6.900 11a7 7 0 0 0 12.200 0z" fill="#1a9c5b" />
            <circle cx={16} cy={16} r={7} fill="#fff" />
            <circle cx={16} cy={16} r={5.5} fill="#4a86ee" />
          </Ico>
        </TaskButton>
        <TaskButton>
          <Ico w={34} h={34}>
            <path d="M17 1l8 8-4 4h-8L9 9z" fill="#fb7a7a" />
            <path d="M8 10l6 6v2l-6 6-7-7z" fill="#7fb0ff" />
            <path d="M26 10l7 7-7 7-6-6v-2z" fill="#85d560" />
            <path d="M14 20h6l5 5-8 8-8-8z" fill="#ffe680" />
            <path d="M17 7v20M17 12l7 6" stroke="#6c96c4" strokeWidth={2} />
            <circle cx={17} cy={24} r={2.6} fill="#6c96c4" />
            <circle cx={17} cy={12} r={2.6} fill="#6c96c4" />
            <circle cx={24} cy={17} r={2.6} fill="#6c96c4" />
          </Ico>
        </TaskButton>
        <TaskButton>
          <div className="mr-[2px] flex h-[32px] w-[32px] items-center justify-center border border-[#123b63] bg-[#0f6ab2] text-[16px] font-extrabold leading-[30px] tracking-[-0.5px] text-white">
            MP
          </div>
        </TaskButton>
        <TaskButton>
          <Ico w={32} h={32} c="mr-[2px]">
            <path d="M17 5h13v22H17z" fill="#fff" stroke="#d24726" strokeWidth={1.5} />
            <path d="M19 20.500h9M19 23.500h9" stroke="#d24726" strokeWidth={1.5} />
            <circle cx={23} cy={13} r={4.5} fill="#d24726" />
            <path d="M24 12V8a4.500 4.500 0 0 1 4 4z" fill="#d24726" stroke="#fff" />
            <path d="M1 4l18-3v30L1 28z" fill="#d24726" />
            <path d="M7.500 22V10.500h3a3.500 3.500 0 0 1 0 7h-3" stroke="#fff" strokeWidth={2.6} />
          </Ico>
        </TaskButton>
        <TaskButton active>
          <PaletteIcon s={32} />
        </TaskButton>
      </div>
    </div>
  );
}

function Tray() {
  return (
    <div className="ml-auto flex h-[40px] items-center text-white">
      <Ico w={8} h={5} c="mt-[3px]"><path d="M0 5h8L4 0z" fill="#fff" /></Ico>
      <Ico w={17} h={16} c="ml-[13px]">
        <path d="M1 0v16" stroke="#fff" strokeWidth={2} />
        <path d="M3 2c3-1 5 1 10 0v7c-5 1-7-1-10 0z" fill="#fff" stroke="#2f5680" strokeWidth={0.5} />
        <circle cx={11.5} cy={11} r={4.5} fill="#d8352c" />
        <path d="M9.500 9l4 4M13.500 9l-4 4" stroke="#fff" strokeWidth={1.5} />
      </Ico>
      <Ico w={16} h={16} c="ml-[7px]">
        <path d="M1.500 1v4M4.500 1v4M3 8v7" stroke="#fff" strokeWidth={1.5} />
        <path d="M0 4.500h6.500V8L4 9.500H2L0 8z" fill="#fff" />
        <path d="M8.500 2.500h6V14.500h-6z" stroke="#fff" strokeWidth={1.6} />
        <path d="M10 1h3" stroke="#fff" strokeWidth={2} />
        <path d="M10 5h3v8h-3z" fill="#fff" />
      </Ico>
      <Ico w={16} h={14} c="ml-[8px]">
        <path d="M0 10h2v3H0zM3 9h2v4H3zM6 7h2v6H6zM9.500 4h2v9h-2zM13 1h2.500v12H13z" fill="#fff" />
      </Ico>
      <Ico w={14} h={15} c="ml-[10px]">
        <path d="M0 5h3l5-4.500v14L3 10H0z" fill="#fff" />
        <path d="M10 4.500q2 3 0 6" stroke="#fff" strokeWidth={1.3} />
      </Ico>
      <span className="ml-[12px] text-[15px] font-medium leading-[20px]">英</span>
      <div className="ml-[13px] h-[16px] w-[16px] border border-white bg-[#0d2d4d] p-px outline outline-[#2a5078]">
        <div className="h-[12px] w-[12px] bg-white text-center text-[12px] font-bold leading-[12px] text-[#0d1d2d]">M</div>
      </div>
      <div className="ml-[12px] mr-[17px] w-[71px] whitespace-nowrap text-center text-[12px] leading-[17px]">
        <div>13:02</div>
        <div className="tracking-[0.2px]">2016/3/17</div>
      </div>
    </div>
  );
}

function PowerPoint() {
  return (
    <div className="flex h-[1080px] w-[1920px] flex-col">
      <TitleBar />
      <TabBar />
      <Ribbon />
      <div className="flex h-[874px] bg-linear-to-b from-white via-[#f9f9f9] to-[#efefef] pt-[2px]">
        <Thumbs />
        <div className="ml-[2px] flex h-[870px] w-[1723px] border-b border-[#d0d0d0]">
          <div className="w-[1422px] shrink-0 pl-[23px] pt-[45px]">
            <div className="h-[775px] w-[1375px] border border-[#c6c6c6] bg-white">
              <Diagram />
            </div>
          </div>
          <Scrollbar />
          <FormatPane />
        </div>
      </div>
      <StatusBar />
      <div className="flex h-[40px] bg-linear-to-b from-[#528ccb] to-[#4b80ba]">
        <TaskIcons />
        <Tray />
      </div>
    </div>
  );
}

/* ---------------------------------------------------------------- Paint */

function PGroup({ w, label = "", lp = "", children }: Kids & { w: string; label?: string; lp?: string }) {
  return (
    <div className={`flex h-[91px] shrink-0 flex-col border-r border-[#e2e3e4] ${w}`}>
      <div className="flex h-[74px]">{children}</div>
      <div className={`h-[17px] text-center text-[12px] leading-[19px] text-[#8c8c8c] ${lp}`}>{label}</div>
    </div>
  );
}

function PRow({ icon, text, off, arrow }: { icon: React.ReactNode; text: string; off?: boolean; arrow?: string }) {
  return (
    <div className={`flex h-[22px] items-center whitespace-nowrap text-[12px] leading-[22px] ${off ? "text-[#8d8d8d]" : "text-[#333]"}`}>
      <div className="flex w-[16px] justify-center">{icon}</div>
      <span className="ml-[3px]">{text}</span>
      {arrow && <Dn c={arrow} color={off ? "#a0a0a0" : "#222"} />}
    </div>
  );
}

const paintShapes = [
  "M2 4l16 12",
  "M2 14c4 6 6-2 7-6s5-4 5 0 3 2 4-4",
  "M10 4c10 0 10 12 0 12S0 4 10 4z",
  "M2.500 4.500h14v11h-14z",
  "M5 4.500h10q2.500 0 2.500 2.500v6q0 2.500-2.500 2.500H5Q2.500 15.500 2.500 13V7Q2.500 4.500 5 4.500z",
  "M5.500 4.500h11l-4 6h4v5h-14z",
  "M10 4.500l7 11.500H3z",
  "M2.500 3v13.500H17z",
  "M10 3.500l7 6.500-7 6.500L3 10z",
  "M10 4l7.500 5.500-3 7.500h-9l-3-7.500z",
  "M10 3l7 3.500v7L10 17l-7-3.500v-7z",
  "M2.500 7.500h7.500V4l7 6-7 6v-3.500H2.500z",
  "M17.500 7.500H10V4l-7 6 7 6v-3.500h7.500z",
  "M7.500 16.500V10H3.500L10 3.500l6.500 6.500h-4v6.500z",
  "M7.500 3.500V10H3.500l6.500 6.500 6.500-6.500h-4V3.500z",
  "M10 3.500l1.500 5 5.500 1.500-5.500 1.500-1.500 5-1.500-5L3 10l5.500-1.500z",
  "M10 3l2 5h5l-4 3.500 1.500 5.500-4.500-3-4.500 3L7 11.500 3 8h5z",
  "M10 3l2.500 3.500H17L14.500 10l2.500 3.500h-4.500L10 17l-2.500-3.500H3L5.500 10 3 6.500h4.500z",
  "M5 4.500h10q2 0 2 2v5q0 2-2 2H9l-3 3v-3H5q-2 0-2-2v-5q0-2 2-2z",
  "M10 4c9 0 9 9 0 9.500L6 17l.5-4C0 11 1 4 10 4z",
  "M6 5q3-3 5 0 4-2 5 1 3 3 0 5 0 4-4 3l-3 2-3-2q-4 0-3-4-3-3 1-5z",
];

const paletteTop = ["#000000", "#7f7f7f", "#880015", "#ed1c24", "#ff7f27", "#fff200", "#22b14c", "#00a2e8", "#3f48cc", "#a349a4"];
const paletteMid = ["#ffffff", "#c3c3c3", "#b97a57", "#ffaec9", "#ffc90e", "#efe4b0", "#b5e61d", "#99d9ea", "#7092be", "#c8bfe7"];

function PaintTop() {
  return (
    <>
      <div className="flex h-[23px] items-start border-b border-[#4f93e0] bg-[#6bacf7]">
        <div className="flex h-[21px] w-[646px] items-center">
          <PaletteIcon s={16} />
          <div className="ml-[7px] h-[12px] w-px bg-[#47729f]" />
          <Ico w={14} h={14} c="ml-[10px] mt-[2px]">
            <path d="M0 0h14v14H0z" fill="#7a4c9c" />
            <path d="M3 0h8v8H3z" fill="#f2f0f8" />
            <path d="M3 10h8v4H3z" fill="#b9a2cf" />
            <path d="M5 11h2v3H5z" fill="#4a2a66" />
          </Ico>
          <Ico w={13} h={13} c="ml-[9px] mt-[2px]">
            <path d="M0 0l1.500 6.500L7.500 6z" fill="#9aabc9" />
            <path d="M2.500 4.500C6 1 12 2.500 11.500 7c0 3-2 4.500-5 5.500" stroke="#9aabc9" strokeWidth={2.8} />
          </Ico>
          <Ico w={13} h={13} c="ml-[8px] mt-[2px]">
            <path d="M13 0l-1.500 6.500L5.500 6z" fill="#9aabc9" />
            <path d="M10.500 4.500C7 1 1 2.500 1.500 7c0 3 2 4.500 5 5.500" stroke="#9aabc9" strokeWidth={2.8} />
          </Ico>
          <Ico w={7} h={7} c="ml-[9px] mt-[3px]"><path d="M0 .5h7" stroke="#111" /><path d="M0 3h7L3.500 6.500z" fill="#111" /></Ico>
          <div className="ml-[10px] h-[12px] w-px bg-[#47729f]" />
        </div>
        <div className="whitespace-nowrap text-[15px] leading-[22px] tracking-[0.1px] text-[#2a3440]">无标题 - 画图</div>
        <Ico w={8} h={2} c="ml-auto mt-[11px]"><path d="M0 0h8v2H0z" fill="#222" /></Ico>
        <Ico w={10} h={10} c="ml-[17px] mt-[4px]"><path d="M.5 2.500h7v7h-7zM.5 3.500h7M2.500.5h7v7" stroke="#222" /></Ico>
        <div className="ml-[9px] mr-[3px] flex h-[19px] w-[45px] items-center justify-center bg-[#c75050]">
          <Ico w={8} h={7}><path d="M1 .5l6 6M7 .5l-6 6" stroke="#fff" strokeWidth={1.7} /></Ico>
        </div>
      </div>
      <div className="flex h-[25px] border-b border-[#dadbdc] bg-white text-[12px] text-[#333]">
        <div className="h-[23px] w-[56px] bg-[#1979ca] text-center leading-[23px] text-white">文件</div>
        <div className="ml-px h-[25px] w-[51px] border-r border-[#dadbdc] bg-[#f5f6f7] text-center leading-[25px]">主页</div>
        <div className="ml-[15px] leading-[25px]">查看</div>
        <Ico w={9} h={6} c="ml-auto mt-[9px]"><path d="M1 5.500L4.500 1.500 8 5.500" stroke="#888" strokeWidth={1.6} /></Ico>
        <div className="ml-[10px] mr-[4px] mt-[5px] h-[14px] w-[14px] rounded-full bg-[#1979ca] text-center text-[11px] font-bold leading-[14px] text-white">?</div>
      </div>
    </>
  );
}

function PaintRibbon() {
  const lab = "text-[12px] leading-[16px] whitespace-nowrap text-[#333]";
  return (
    <div className="flex h-[97px] border-b border-[#dadbdc] bg-[#f5f6f7] pt-[2px]">
      <PGroup w="w-[105px]" label="剪贴板">
        <div className="ml-[14px] flex w-[26px] flex-col">
          <Ico w={26} h={31} c="mt-[5px]">
            <rect x={0.5} y={2.5} width={24} height={28} rx={1} fill="#a8763f" stroke="#845a2b" />
            <path d="M3 6h19v22H3z" fill="#fff" />
            <path d="M5 10.500h15M5 13.500h15M5 16.500h15M5 19.500h15M5 22.500h15M5 25.500h15" stroke="#b5cbe0" />
            <path d="M6 6V3.500h3.500L11 .5h3l1.500 3H19V6z" fill="#9a9a9a" stroke="#666" strokeWidth={0.7} />
          </Ico>
          <span className={`mt-[4px] ${lab}`}>粘贴</span>
          <Dn c="ml-[11px] mt-[5px]" color="#222" />
        </div>
        <div className="ml-[11px] mt-[2px]">
          <PRow off text="剪切" icon={
            <Ico w={11} h={15}>
              <path d="M2 0l5 10M9 0L4 10" stroke="#94a5bf" strokeWidth={1.8} />
              <circle cx={2.5} cy={12} r={1.9} stroke="#94a5bf" strokeWidth={1.3} />
              <circle cx={8.5} cy={12} r={1.9} stroke="#94a5bf" strokeWidth={1.3} />
            </Ico>} />
          <PRow off text="复制" icon={
            <Ico w={15} h={16}>
              <path d="M.5.500h6l3 3v8h-9zM5.500 4.500h6l3 3v8h-9z" fill="#eef2f8" stroke="#9fb0c8" />
              <path d="M2 4.500h4M7.500 9.500h5M7.500 11.500h5M7.500 13.500h5" stroke="#9fb0c8" />
            </Ico>} />
        </div>
      </PGroup>
      <PGroup w="w-[151px]" label="图像" lp="pr-[2px]">
        <div className="ml-[10px] flex w-[30px] flex-col">
          <Ico w={30} h={25} c="mt-[9px]">
            <rect x={0.5} y={0.5} width={29} height={23} stroke="#2d6fad" strokeDasharray="2 1" />
          </Ico>
          <span className={`ml-[2px] mt-[6px] ${lab}`}>选择</span>
          <Dn c="ml-[14px] mt-[5px]" color="#222" />
        </div>
        <div className="ml-[9px] mt-[2px]">
          <PRow off text="裁剪" icon={
            <Ico w={13} h={13}><path d="M2.500 0v10.500H13M0 2.500h10.500V13M4 9l8-8" stroke="#94a5bf" strokeWidth={1.3} /></Ico>} />
          <PRow text="重新调整大小" icon={
            <Ico w={14} h={13}><path d="M4.500.5h8v8h-8z" fill="#e6f0f8" stroke="#2d6fad" strokeWidth={1.3} /><path d="M3 7.500H.5v4h5V10" stroke="#2d6fad" strokeWidth={1.3} /></Ico>} />
          <PRow text="旋转" arrow="ml-[5px]" icon={
            <Ico w={16} h={13}>
              <path d="M0 12.500h8V6z" fill="#bbb" />
              <path d="M10 2v10.500h5.500z" fill="#1d6ca8" />
              <path d="M2 5c1-3 3-3.500 6-3.500M6 0l2.500 1.500L6 4" stroke="#3f8fd0" strokeWidth={1.2} />
            </Ico>} />
        </div>
      </PGroup>
      <PGroup w="w-[80px]" label="工具" lp="pr-[2px]">
        <div className="ml-[4px] mt-[8px] grid h-[58px] grid-cols-[repeat(3,23.500px)] grid-rows-[29px_29px] place-items-center">
          <Ico w={16} h={16}>
            <path d="M1.500 14.500l1-3.500L12 2l2 2-9.500 9.500z" fill="#f2d06b" stroke="#a8762a" strokeWidth={0.8} />
            <path d="M1 15l.8-2.500 1.700 1.700z" fill="#222" />
            <path d="M12.500.8l2.700 2.700-1.700 1.700-2.700-2.700z" fill="#e0707a" />
          </Ico>
          <Ico w={17} h={16}>
            <path d="M9 1l7 7-7 7-5-6z" fill="#b9d3ea" stroke="#6a8fb5" />
            <path d="M6 5C2 5 0 8 .5 14 2.500 11 4 8 8 6z" fill="#e25c22" />
            <path d="M8 7V2a1.500 1.500 0 0 1 3 0v4" stroke="#777" />
          </Ico>
          <span className='font-["Liberation_Serif"] text-[19px] font-bold leading-[20px] text-[#1d3a66]'>A</span>
          <Ico w={17} h={14}>
            <path d="M1 9L8 1h8l-6 8v4H2z" fill="#e9969a" stroke="#b55a60" strokeWidth={0.7} />
            <path d="M1 9h8v4.500H2z" fill="#f7c4c0" />
          </Ico>
          <Ico w={16} h={16}>
            <path d="M1 15l1-3 7-7 2.500 2.500-7 7z" fill="#cfe0ee" stroke="#6a8fb5" strokeWidth={0.8} />
            <path d="M8 4l4-3.500q3-.5 3.500 2.500L12 8z" fill="#1d5f9e" />
          </Ico>
          <Ico w={16} h={16}>
            <circle cx={6} cy={6} r={4.8} fill="#d9ecf8" stroke="#8fa5ba" strokeWidth={1.5} />
            <path d="M9.500 9.500l5 5" stroke="#8a5a3c" strokeWidth={2.6} />
          </Ico>
        </div>
      </PGroup>
      <PGroup w="w-[53px]">
        <div className="ml-[4px] mt-[2px] flex h-[69px] w-[42px] flex-col items-center border border-[#64a5e7] bg-[#c9e0f7]">
          <div className="flex h-[37px] w-full items-center justify-center border-b border-[#64a5e7]">
            <Ico w={32} h={32}>
              <path d="M.5.5h31v31H.5z" fill="#f0f4f7" stroke="#999" />
              <path d="M13 7C3 8 0 20 6 26c3 3 8 4 11 2-6-1-11-5-10-11 0-4 3-7 6-10z" fill="#e2562b" />
              <path d="M21 15L29.500 3l1.500 1v8l-7 8z" fill="#8fa3b8" stroke="#5f7185" strokeWidth={0.7} />
              <path d="M11 28c4-2 3-9 10-12l4 4c0 6-6 10-14 8z" fill="#a26b34" stroke="#6d451c" strokeWidth={0.7} />
            </Ico>
          </div>
          <span className={`pr-px ${lab}`}>刷子</span>
          <Dn c="mt-[6px]" color="#222" />
        </div>
      </PGroup>
      <PGroup w="w-[232px]" label="形状" lp="pr-[4px]">
        <div className="ml-[5px] mt-[5px] flex h-[60px] w-[157px] shrink-0 border border-[#dadbdc] bg-[#fafcfe]">
          <div className="-mt-px grid h-[58px] grid-cols-[repeat(7,20.100px)] grid-rows-[repeat(3,19.500px)]">
            {paintShapes.map((d, i) => (
              <Ico w={20} h={20} key={i}>
                <path d={d} stroke="#2a6ca8" strokeWidth={1.2} fill={i < 2 ? "none" : "#e8f4fb"} />
              </Ico>
            ))}
          </div>
          <div className="ml-auto flex w-[15px] flex-col items-center border-l border-[#dadbdc] bg-[#f5f6f7] pt-[8px]">
            <Ico w={5} h={3}><path d="M0 3h5L2.500 0z" fill="#aab" /></Ico>
            <Dn c="mt-[17px]" color="#334" />
            <Ico w={7} h={6} c="mt-[14px]"><path d="M0 .5h7" stroke="#334" /><path d="M1 3h5L3.500 6z" fill="#334" /></Ico>
          </div>
        </div>
        <div className="ml-[6px] mt-[2px]">
          <PRow off text="轮廓" arrow="ml-[5px]" icon={
            <Ico w={16} h={14}><path d="M10 1.500H.5v11h5" stroke="#a3b0c4" /><path d="M2 13l1.500-4 9-8.500 2.500 2-9 9z" fill="#c9d4e2" stroke="#94a5bf" /></Ico>} />
          <PRow off text="填充" arrow="ml-[5px]" icon={
            <Ico w={16} h={15}>
              <path d="M8 1l6 6-6 5-5-5z" fill="#dbe4ef" stroke="#94a5bf" />
              <path d="M5 4c-3 0-4 3-3 7 1-3 3-4 6-5z" fill="#a9b8cf" />
              <path d="M0 12h16v3H0z" fill="#b6c3d8" />
            </Ico>} />
        </div>
      </PGroup>
      <PGroup w="w-[53px]">
        <div className="flex w-full flex-col items-center">
          <Ico w={32} h={28} c="mt-[6px] ml-[-3px]">
            <path d="M0 0h32v1H0zM0 5h32v2H0zM0 12h32v4H0zM0 20h32v7H0z" fill="#1e3a63" />
          </Ico>
          <span className={`ml-[-4px] mt-[6px] ${lab}`}>粗细</span>
          <Dn c="mt-[5px]" color="#222" />
        </div>
      </PGroup>
      <PGroup w="w-[368px]" label="颜色" lp="pr-[3px]">
        <div className="ml-[4px] mt-[2px] flex h-[69px] w-[42px] shrink-0 flex-col items-center border border-[#64a5e7] bg-[#c9e0f7] pt-[2px]">
          <div className="h-[32px] w-[32px] border border-[#808080] bg-black p-0 shadow-[inset_0_0_0_1px_#c9e0f7]" />
          <span className={`mt-[3px] ${lab}`}>颜色 1</span>
        </div>
        <div className="flex w-[42px] shrink-0 flex-col items-center pt-[9px]">
          <div className="h-[24px] w-[24px] border border-[#808080] bg-white" />
          <span className={`mt-[7px] ${lab}`}>颜色 2</span>
        </div>
        <div className="mt-[3px] grid h-[64px] shrink-0 grid-cols-[repeat(10,20px)] grid-rows-[repeat(3,20px)] gap-x-[2px] gap-y-[2px] pl-px">
          {[...paletteTop, ...paletteMid].map((c) => (
            <div key={c} className="h-[20px] w-[20px] border border-[#a0a0a0] bg-white p-px">
              <div className="h-full w-full" style={{ backgroundColor: c }} />
            </div>
          ))}
          {paletteTop.map((c) => (
            <div key={`empty-${c}`} className="h-[20px] w-[20px] border border-[#a0a0a0] bg-[#f5f6f7]" />
          ))}
        </div>
        <div className="ml-[3px] flex w-[48px] shrink-0 flex-col items-center">
          <div className="mr-px mt-[6px] h-[29px] w-[29px] border border-[#a0a0a0] bg-white p-px shadow-[1px_1px_1px_#bbb]">
            <div className="h-full w-full bg-[linear-gradient(to_bottom,transparent,#808080cc),linear-gradient(to_right,red,yellow,lime,cyan,blue,magenta,red)]" />
          </div>
          <span className={`mt-[5px] ${lab}`}>编辑颜色</span>
        </div>
      </PGroup>
    </div>
  );
}

function Handle({ c }: { c: string }) {
  return <div className={`absolute h-[5px] w-[5px] border border-[#444] bg-white ${c}`} />;
}

function Paint() {
  const st = "flex h-full items-center border-r border-[#d7d7d7]";
  return (
    <div className="ml-[267px] flex h-[768px] w-[1366px] flex-col">
      <PaintTop />
      <PaintRibbon />
      <div className="h-[557px] bg-linear-to-b from-[#c6cfe0] to-[#dce6f2] pl-[5px] pt-[5px]">
        <div className="relative h-[476px] w-[1006px] bg-white">
          <div className="absolute left-full top-[9px] h-[475px] w-[6px] bg-linear-to-r from-[#a6b3c9] to-transparent" />
          <div className="absolute left-[9px] top-full h-[8px] w-[999px] bg-linear-to-b from-[#a6b3c8] to-[#cdd8e7]" />
          <Handle c="left-[1006px] top-[236px]" />
          <Handle c="left-[501px] top-[476px]" />
          <Handle c="left-[1006px] top-[476px]" />
        </div>
      </div>
      <div className="flex h-[26px] items-center border-t border-[#d7d7d7] bg-[#f0f0f0] text-[12px] text-black">
        <div className={`${st} w-[178px] pl-[4px]`}>
          <Ico w={11} h={11}><path d="M5.500 0v11M0 5.500h11M4 2l1.500-1.500L7 2M4 9l1.500 1.500L7 9M2 4L.5 5.500 2 7M9 4l1.500 1.500L9 7" stroke="#1e3a63" /></Ico>
        </div>
        <div className={`${st} w-[178px] pl-[5px]`}>
          <Ico w={14} h={12}>
            <path d="M1.500 0v6M0 2l1.500-1.500L3 2M5 11.500h8M11.500 10l1.500 1.500" stroke="#1e3a63" />
            <rect x={4.5} y={0.5} width={8} height={8} stroke="#1e3a63" strokeDasharray="2 1" />
          </Ico>
        </div>
        <div className={`${st} w-[178px] pl-[5px]`}>
          <Ico w={14} h={12}>
            <path d="M1.500 0v6M0 2l1.500-1.500L3 2M5 11.500h8M11.500 10l1.500 1.500M4.500.5h8v8h-8z" stroke="#1e3a63" />
          </Ico>
          <span className="ml-[5px] whitespace-nowrap [word-spacing:2px]">1006 × 476像素</span>
        </div>
        <div className={`${st} w-[178px]`} />
        <div className={`${st} w-[456px]`} />
        <span className="ml-[17px] w-[40px]">100%</span>
        <Ico w={15} h={15}><circle cx={7.5} cy={7.5} r={6.5} fill="#fafafa" stroke="#666" /><path d="M4 7.500h7" stroke="#333" strokeWidth={1.5} /></Ico>
        <Ico w={86} h={16} c="ml-[10px]">
          <path d="M.5 6.500h85v3H.500z" fill="#e4e4e4" stroke="#d0d0d0" />
          <path d="M38.500.500h9v11l-4.500 4-4.500-4z" fill="#f0f0f0" stroke="#999" />
        </Ico>
        <Ico w={15} h={15} c="ml-[10px]"><circle cx={7.5} cy={7.5} r={6.5} fill="#fafafa" stroke="#666" /><path d="M4 7.500h7M7.500 4v7" stroke="#333" strokeWidth={1.5} /></Ico>
      </div>
      <div className="flex h-[40px] bg-linear-to-b from-[#528ccb] to-[#4b80ba]">
        <TaskIcons />
      </div>
    </div>
  );
}

export default function App() {
  return (
    <div className='h-[1848px] w-[1920px] overflow-hidden bg-black font-["Open_Sans","Noto_Sans_CJK_SC",sans-serif]'>
      <div className="bg-[#fefefe]">
        <PowerPoint />
      </div>
      <Paint />
    </div>
  );
}
